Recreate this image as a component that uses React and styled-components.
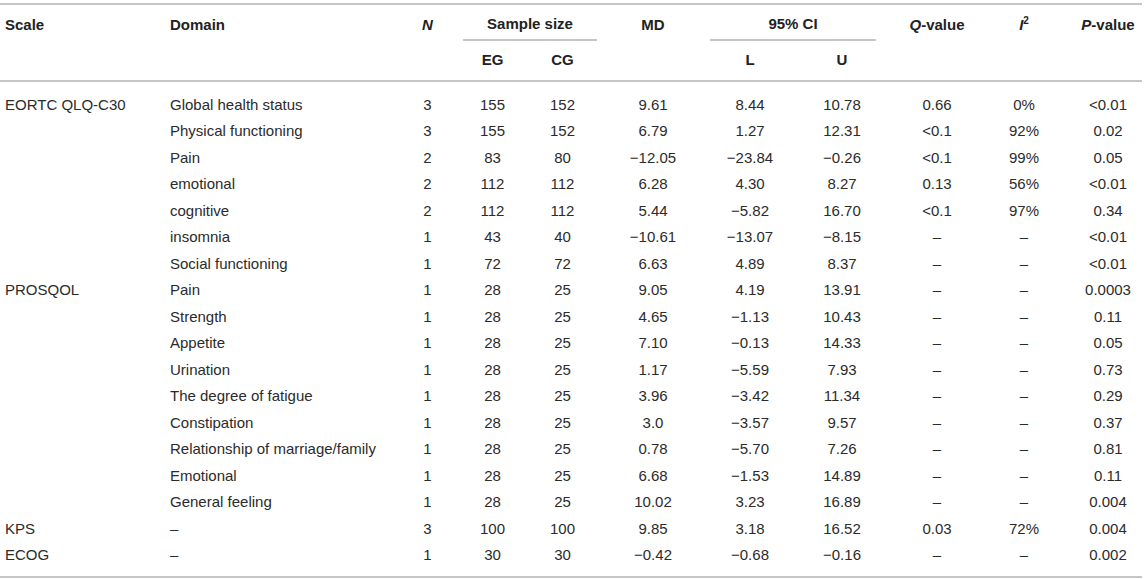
import styled, { createGlobalStyle } from "styled-components";

const GlobalStyle = createGlobalStyle`
  body {
    margin: 0;
    background: #fff;
    font-family: "Liberation Sans", Arial, Helvetica, sans-serif;
    font-size: 15px;
    color: #2b2b2b;
  }
`;

const COLS = "165px 230px 65px 65px 75px 106px 88px 96px 94px 80px 78px";
const RULE = "2px solid #c6c6c6";

const Table = styled.div`
  width: 1142px;
  margin-top: 3px;
  border-top: ${RULE};
  border-bottom: ${RULE};
`;

const Head = styled.div`
  display: grid;
  grid-template-columns: ${COLS};
  grid-template-rows: 36px 39px;
  border-bottom: ${RULE};
  font-weight: bold;
  color: #222;
`;

const HeadCell = styled.div`
  grid-column: ${(p) => p.$col} / span ${(p) => p.$span || 1};
  grid-row: ${(p) => p.$row || 1};
  display: flex;
  flex-direction: column;
  justify-content: center;
  text-align: ${(p) => (p.$left ? "left" : "center")};
  padding: ${(p) => (p.$row === 2 ? "0 0 2px" : "3px 0 0")};
  padding-left: ${(p) => p.$pl || 0}px;
`;

const GroupLabel = styled.div`
  flex: 1;
  display: flex;
  align-items: center;
  justify-content: center;
  margin: 0 ${(p) => p.$mr}px 0 ${(p) => p.$ml}px;
  border-bottom: ${RULE};
`;

const Ital = styled.i`
  font-style: italic;
`;

const Sup = styled.sup`
  font-size: 10px;
  line-height: 0;
`;

const Body = styled.div`
  padding: 9px 0 8px;
`;

const Row = styled.div`
  display: grid;
  grid-template-columns: ${COLS};
  height: 26.5px;
  align-items: center;
`;

const Cell = styled.div`
  text-align: ${(p) => (p.$left ? "left" : "center")};
  padding-left: ${(p) => p.$pl || 0}px;
  white-space: nowrap;
`;

const rows = [
  ["EORTC QLQ-C30", "Global health status", "3", "155", "152", "9.61", "8.44", "10.78", "0.66", "0%", "<0.01"],
  ["", "Physical functioning", "3", "155", "152", "6.79", "1.27", "12.31", "<0.1", "92%", "0.02"],
  ["", "Pain", "2", "83", "80", "−12.05", "−23.84", "−0.26", "<0.1", "99%", "0.05"],
  ["", "emotional", "2", "112", "112", "6.28", "4.30", "8.27", "0.13", "56%", "<0.01"],
  ["", "cognitive", "2", "112", "112", "5.44", "−5.82", "16.70", "<0.1", "97%", "0.34"],
  ["", "insomnia", "1", "43", "40", "−10.61", "−13.07", "−8.15", "–", "–", "<0.01"],
  ["", "Social functioning", "1", "72", "72", "6.63", "4.89", "8.37", "–", "–", "<0.01"],
  ["PROSQOL", "Pain", "1", "28", "25", "9.05", "4.19", "13.91", "–", "–", "0.0003"],
  ["", "Strength", "1", "28", "25", "4.65", "−1.13", "10.43", "–", "–", "0.11"],
  ["", "Appetite", "1", "28", "25", "7.10", "−0.13", "14.33", "–", "–", "0.05"],
  ["", "Urination", "1", "28", "25", "1.17", "−5.59", "7.93", "–", "–", "0.73"],
  ["", "The degree of fatigue", "1", "28", "25", "3.96", "−3.42", "11.34", "–", "–", "0.29"],
  ["", "Constipation", "1", "28", "25", "3.0", "−3.57", "9.57", "–", "–", "0.37"],
  ["", "Relationship of marriage/family", "1", "28", "25", "0.78", "−5.70", "7.26", "–", "–", "0.81"],
  ["", "Emotional", "1", "28", "25", "6.68", "−1.53", "14.89", "–", "–", "0.11"],
  ["", "General feeling", "1", "28", "25", "10.02", "3.23", "16.89", "–", "–", "0.004"],
  ["KPS", "–", "3", "100", "100", "9.85", "3.18", "16.52", "0.03", "72%", "0.004"],
  ["ECOG", "–", "1", "30", "30", "−0.42", "−0.68", "−0.16", "–", "–", "0.002"],
];

export default function App() {
  return (
    <>
      <GlobalStyle />
      <Table>
        <Head>
          <HeadCell $col={1} $left $pl={5}>Scale</HeadCell>
          <HeadCell $col={2} $left $pl={5}>Domain</HeadCell>
          <HeadCell $col={3} $pl={0}><Ital>N</Ital></HeadCell>
          <HeadCell $col={4} $span={2}>
            <GroupLabel $ml={3} $mr={3}>Sample size</GroupLabel>
          </HeadCell>
          <HeadCell $col={6}>MD</HeadCell>
          <HeadCell $col={7} $span={2}>
            <GroupLabel $ml={4} $mr={14}>95% CI</GroupLabel>
          </HeadCell>
          <HeadCell $col={9}><span><Ital>Q</Ital>-value</span></HeadCell>
          <HeadCell $col={10}><span><Ital>I</Ital><Sup>2</Sup></span></HeadCell>
          <HeadCell $col={11} $pl={10}><span><Ital>P</Ital>-value</span></HeadCell>
          <HeadCell $col={4} $row={2}>EG</HeadCell>
          <HeadCell $col={5} $row={2}>CG</HeadCell>
          <HeadCell $col={7} $row={2}>L</HeadCell>
          <HeadCell $col={8} $row={2}>U</HeadCell>
        </Head>
        <Body>
          {rows.map((r, i) => (
            <Row key={i}>
              {r.map((v, j) => (
                <Cell key={j} $left={j < 2} $pl={j < 2 ? 5 : j === 10 ? 10 : 0}>
                  {v}
                </Cell>
              ))}
            </Row>
          ))}
        </Body>
      </Table>
    </>
  );
}
